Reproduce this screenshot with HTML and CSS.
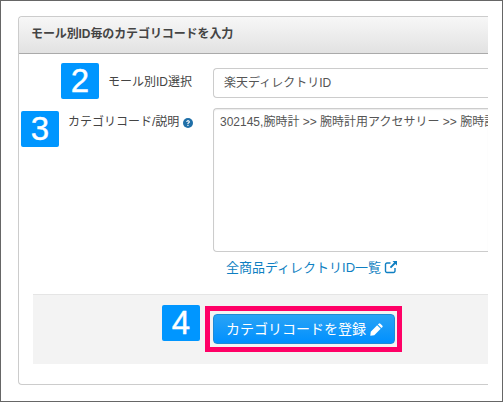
FILE: index.html
```html
<!DOCTYPE html>
<html lang="ja">
<head>
<meta charset="utf-8">
<title>カテゴリコード</title>
<link rel="stylesheet" href="styles.css">
</head>
<body>
<div class="frame">
  <section class="panel">
    <h2 class="panel-head">モール別ID毎のカテゴリコードを入力</h2>
    <div class="panel-body">
      <div class="row row-select">
        <label class="label">モール別ID選択</label>
        <div class="control select">楽天ディレクトリID</div>
      </div>
      <div class="row row-text">
        <label class="label label-code">カテゴリコード/説明
          <svg class="help" viewBox="0 0 16 16" width="10" height="10"><circle cx="8" cy="8" r="8" fill="#1f6fa8"/><path d="M5.200 6.200C5.300 4.500 6.500 3.600 8.100 3.600c1.700 0 2.900 1 2.900 2.400 0 1.200-.7 1.800-1.500 2.300-.6.400-.8.600-.8 1.200v.3H7V9.300c0-1 .4-1.500 1.200-2 .6-.4.900-.7.900-1.200s-.4-.9-1-.9-1.100.4-1.200 1zM7 11h1.800v1.800H7z" fill="#fff"/></svg>
        </label>
        <div class="field">
          <div class="control textarea">302145,腕時計 &gt;&gt; 腕時計用アクセサリー &gt;&gt; 腕時計</div>
          <a class="link">全商品ディレクトリID一覧
            <svg class="ext" viewBox="0 0 14 14" width="14" height="14"><path d="M6.500 3H3a1.500 1.500 0 0 0-1.500 1.500v6.500A1.500 1.500 0 0 0 3 12.500h6.500A1.500 1.500 0 0 0 11 11V8" fill="none" stroke="#0f7fc2" stroke-width="1.400"/><path d="M8.500 1h4.500v4.500l-1.600-1.600-4.300 4.300-1.300-1.300 4.300-4.300z" fill="#0f7fc2"/></svg>
          </a>
        </div>
      </div>
      <div class="foot">
        <button class="btn">カテゴリコードを登録
          <svg class="pen" viewBox="0 0 14 14" width="13" height="13"><path d="M0.300 13.700l.5-4.300 6.900-6.900 3.800 3.800-6.900 6.900zM8.500 1.700l.9-.9a1.300 1.300 0 0 1 1.800 0l2 2a1.300 1.300 0 0 1 0 1.800l-.9.900z" fill="#fff"/></svg>
        </button>
      </div>
    </div>
  </section>
  <span class="badge badge-2">2</span>
  <span class="badge badge-3">3</span>
  <span class="badge badge-4">4</span>
  <span class="marker"></span>
</div>
</body>
</html>
```
FILE: styles.css
```css
* { box-sizing: border-box; }
html, body { margin: 0; padding: 0; }
body {
  width: 503px;
  height: 402px;
  overflow: hidden;
  background: #fff;
  font-family: "Liberation Sans", "Noto Sans CJK JP", sans-serif;
  color: #444;
}
.frame {
  position: relative;
  width: 503px;
  height: 402px;
  padding: 15px 14px 16px 17px;
  border: 1px solid #666;
}
.panel {
  height: 369px;
  border: 1px solid #ccc;
  border-right: 0;
  border-radius: 4px 0 0 4px;
  display: flex;
  flex-direction: column;
}
.panel-head {
  margin: 0;
  height: 37px;
  flex: none;
  padding: 10px 0 0 12px;
  font-size: 12px;
  line-height: 15px;
  font-weight: bold;
  letter-spacing: -0.1px;
  color: #444;
  background: linear-gradient(#f7f7f7, #e2e2e2);
  border-bottom: 1px solid #aaa;
  border-radius: 4px 0 0 0;
}
.panel-body {
  flex: 1;
  display: flex;
  flex-direction: column;
  padding: 14px 0 0 14px;
}
.row { display: flex; }
.row-select { height: 30px; margin-bottom: 10px; }
.row-text { height: 186px; }
.label {
  width: 180px;
  flex: none;
  font-size: 12px;
  line-height: 16px;
  padding: 6px 0 0 75px;
  color: #444;
}
.label-code { padding: 6px 0 0 35px; }
.help { vertical-align: -2px; }
.field { flex: 1; min-width: 0; }
.control {
  border: 1px solid #ccc;
  border-right: 0;
  border-radius: 4px 0 0 4px;
  font-size: 12px;
  color: #555;
  white-space: nowrap;
  overflow: hidden;
}
.select { flex: 1; height: 30px; line-height: 28px; padding-left: 10px; }
.textarea {
  height: 144px;
  padding: 5px 0 0 6px;
  line-height: 16px;
  box-shadow: inset 0 1px 1px rgba(0,0,0,.08);
}
.link {
  display: block;
  margin: 7px 0 0 13px;
  font-size: 13px;
  line-height: 18px;
  color: #0f7fc2;
}
.ext { vertical-align: -2px; margin-left: -1px; }
.foot {
  height: 70px;
  flex: none;
  background: #f3f3f3;
  border-top: 1px solid #e5e5e5;
  padding: 19px 0 0 180px;
}
.btn {
  display: block;
  width: 182px;
  height: 30px;
  padding: 0 0 0 1px;
  border: 1px solid #1f8ad6;
  border-radius: 4px;
  background: linear-gradient(#2aa3f5, #0090ff);
  color: #fff;
  font: 14px/16px "Liberation Sans", "Noto Sans CJK JP", sans-serif;
  white-space: nowrap;
}
.pen { vertical-align: -2px; }
.badge {
  position: absolute;
  width: 38px;
  height: 36px;
  background: #0096ff;
  border-radius: 2px;
  color: #fff;
  font-size: 33px;
  line-height: 36px;
  text-align: center;
  -webkit-text-stroke: 0.4px #fff;
}
.badge-2 { left: 60px; top: 62px; }
.badge-3 { left: 20px; top: 110px; }
.badge-4 { left: 161px; top: 304px; }
.marker {
  position: absolute;
  left: 204px;
  top: 305px;
  width: 197px;
  height: 46px;
  border: 5px solid #ff0066;
}
```
